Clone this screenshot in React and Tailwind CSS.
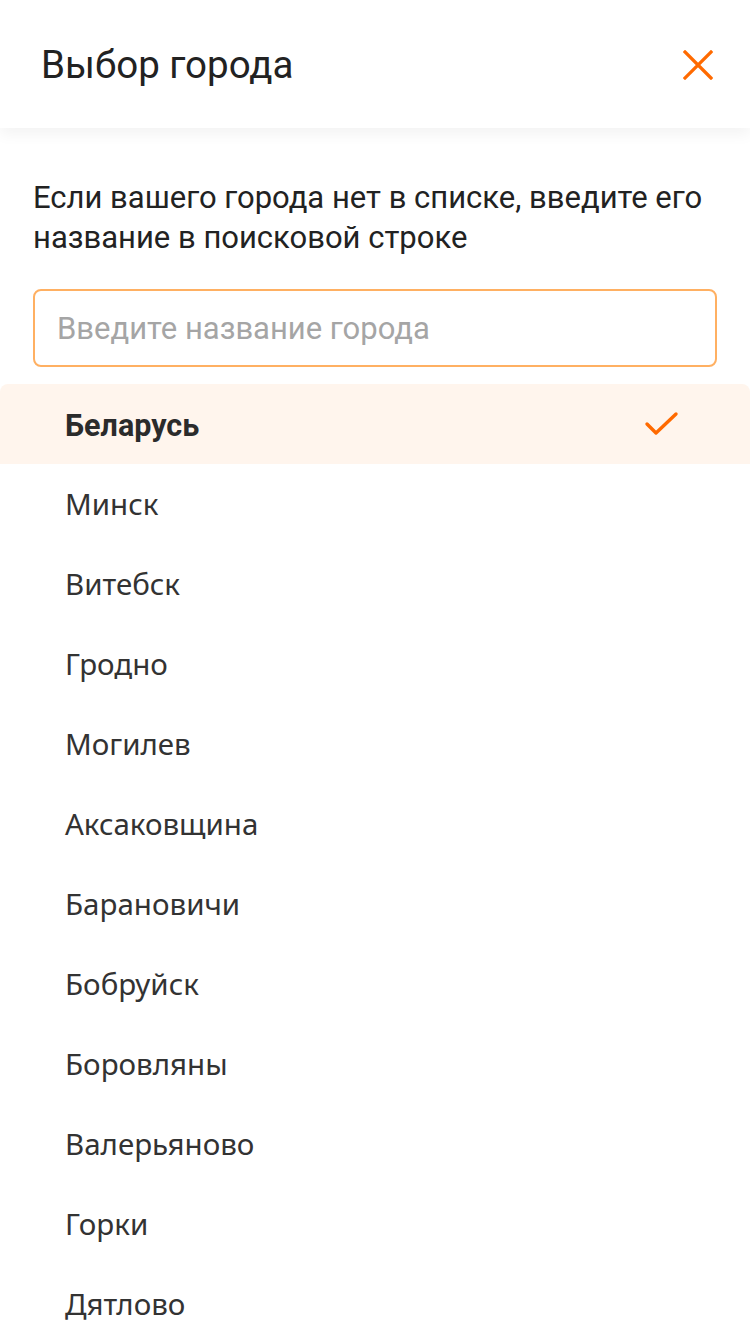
import { useState } from 'react';

const CITIES = [
  'Минск',
  'Витебск',
  'Гродно',
  'Могилев',
  'Аксаковщина',
  'Барановичи',
  'Бобруйск',
  'Боровляны',
  'Валерьяново',
  'Горки',
  'Дятлово',
];

export default function App() {
  const [query, setQuery] = useState('');

  return (
    <div className="w-[750px] h-[1334px] overflow-hidden bg-white text-[#2b2b2b] font-['Roboto',sans-serif]">
      {/* Header */}
      <div className="relative z-10 h-[128px] flex items-center justify-between pl-[41px] pr-[36px] bg-white shadow-[0_6px_14px_rgba(0,0,0,0.05)]">
        <h1 className="mt-[3px] text-[38.5px] leading-none text-[#222]">Выбор города</h1>
        <button className="w-[32px] h-[32px] flex items-center justify-center mt-[2px]">
          <svg width="30" height="30" viewBox="0 0 30 30" fill="none">
            <path d="M2 2L28 28M28 2L2 28" stroke="#ff6a00" strokeWidth="3.2" strokeLinecap="square" />
          </svg>
        </button>
      </div>

      {/* Body */}
      <div className="px-[33px] pt-[50px]">
        <p className="text-[31px] leading-[40px] text-[#222]">
          Если вашего города нет в списке, введите его название в поисковой строке
        </p>
        <input
          value={query}
          onChange={(e) => setQuery(e.target.value)}
          placeholder="Введите название города"
          className="mt-[31px] w-full h-[78px] rounded-[8px] border-2 border-[#ffb062] px-[22px] text-[31px] text-[#222] placeholder:text-[#a5a5a5] outline-none font-['Roboto',sans-serif]"
        />
      </div>

      {/* List */}
      <ul className="mt-[17px]">
        <li className="h-[80px] flex items-center justify-between pl-[65px] pr-[70px] pt-[4px] bg-[#fff5ed] rounded-t-[8px]">
          <span className="text-[30.5px] font-bold text-[#2b2b2b]">Беларусь</span>
          <svg width="36" height="28" viewBox="0 0 36 28" fill="none" className="-mt-[4px]">
            <path d="M3 14L12 23L32 4" stroke="#ff6a00" strokeWidth="3.4" strokeLinecap="round" strokeLinejoin="round" />
          </svg>
        </li>
        {CITIES.map((city) => (
          <li key={city} className="h-[80px] flex items-center pl-[65px] text-[29.5px] text-[#333] font-['Noto_Sans',sans-serif]">
            {city}
          </li>
        ))}
      </ul>
    </div>
  );
}
